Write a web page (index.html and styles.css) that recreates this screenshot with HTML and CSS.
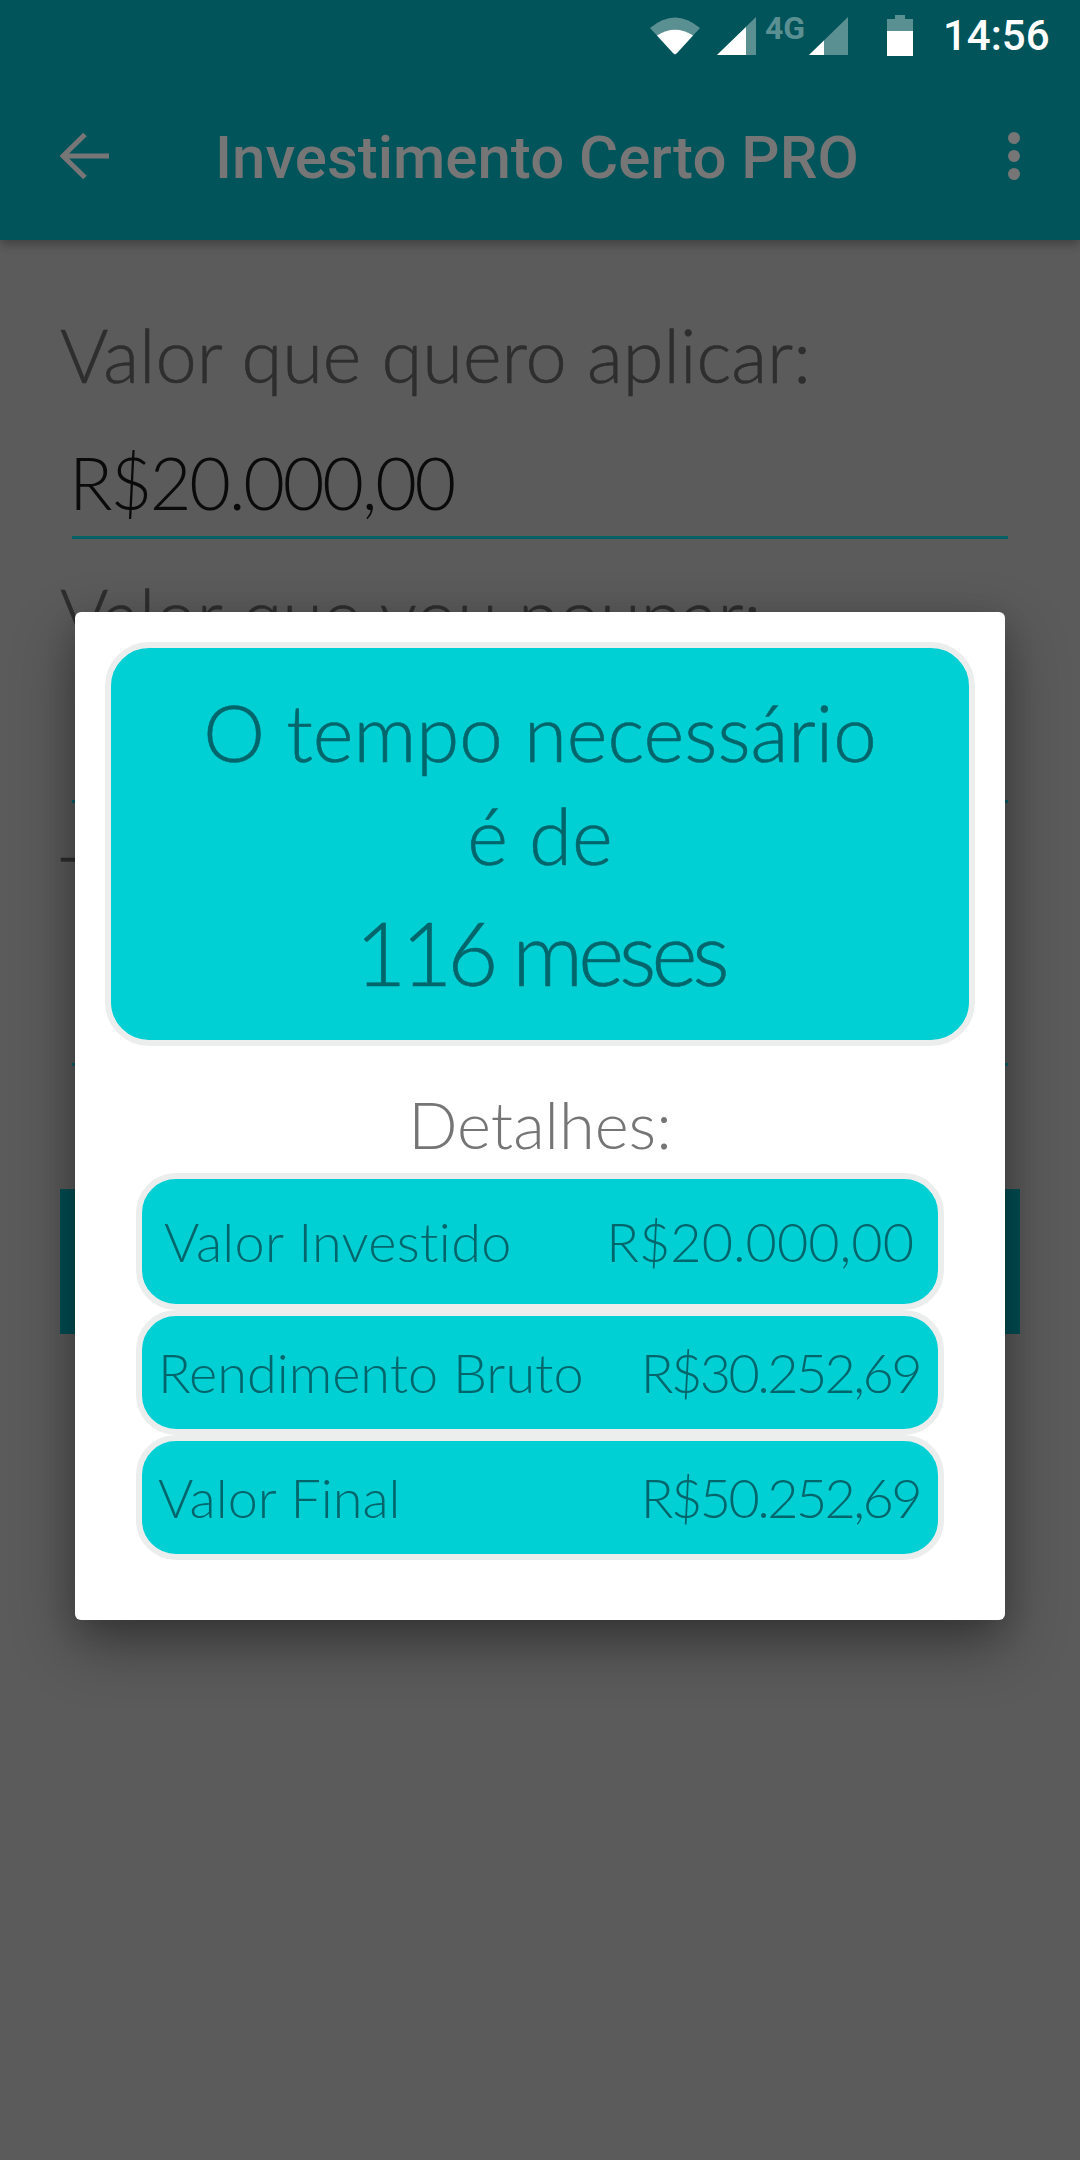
FILE: index.html
```html
<!DOCTYPE html>
<html lang="pt-BR">

<head>
  <meta charset="UTF-8">
  <meta name="viewport" content="width=device-width, initial-scale=1.0">
  <title>Investimento Certo PRO</title>
  <link rel="stylesheet" href="styles.css">
</head>

<body>
  <div class="screen">
    <header class="appbar">
      <div class="statusbar">
        <svg class="ic-wifi" width="50" height="40" viewBox="0 0 50 40">
          <path fill="#5b9093" d="M0 13 Q25 -8 50 13 L25 40 Z" />
          <path fill="#fff" d="M7 20.5 Q25 9 43 20.5 L27 38 Q25 40 23 38 Z" />
        </svg>
        <svg class="ic-signal" width="40" height="38" viewBox="0 0 40 38">
          <path fill="#5b9093" d="M0 38 L39 0 V38 Z" />
          <path fill="#fff" d="M0 38 L29 10 V38 Z" />
        </svg>
        <span class="net">4G</span>
        <svg class="ic-signal2" width="40" height="38" viewBox="0 0 40 38">
          <path fill="#5b9093" d="M0 38 L39 0 V38 Z" />
          <path fill="#fff" d="M0 38 L15 23.5 V38 Z" />
        </svg>
        <svg class="ic-battery" width="26" height="41" viewBox="0 0 26 41">
          <path fill="#5b9093" d="M8 0 H18 V4 H26 V16 H0 V4 H8 Z" />
          <rect fill="#fff" y="16" width="26" height="25" />
        </svg>
        <span class="clock">14:56</span>
      </div>
      <div class="toolbar">
        <svg class="ic-back" width="50" height="46" viewBox="0 0 50 46">
          <path fill="none" stroke="#767676" stroke-width="5" d="M49 23 H3 M25 1.5 L3 23 L25 44.5" />
        </svg>
        <h1>Investimento Certo PRO</h1>
        <div class="more"><i></i><i></i><i></i></div>
      </div>
    </header>

    <main class="form">
      <div class="label">Valor que quero aplicar:</div>
      <div class="field money">R$20.000,00</div>
      <div class="label second">Valor que vou poupar:</div>
      <div class="field short"></div>
      <div class="label third">Taxa de juros ao mês:</div>
      <div class="field short"></div>
      <div class="calc"></div>
    </main>

    <div class="dialog">
      <section class="result">
        <p>O tempo necessário</p>
        <p>é de</p>
        <p class="big">116 meses</p>
      </section>
      <h2>Detalhes:</h2>
      <div class="rows">
        <div class="row r1"><span class="name">Valor Investido</span><span>R$20.000,00</span></div>
        <div class="row r2"><span>Rendimento Bruto</span><span class="val">R$30.252,69</span></div>
        <div class="row r3"><span>Valor Final</span><span class="val">R$50.252,69</span></div>
      </div>
    </div>
  </div>
</body>

</html>
```

FILE: styles.css
```css
* {
  box-sizing: border-box;
}

body {
  margin: 0;
  font-family: Lato, 'Open Sans', sans-serif;
}

.screen {
  position: relative;
  width: 1080px;
  height: 2160px;
  overflow: hidden;
  background: #5b5b5b;
}

.appbar {
  position: relative;
  height: 240px;
  background: #00545a;
  box-shadow: 0 4px 10px rgba(0, 0, 0, 0.3);
}

.statusbar {
  display: flex;
  align-items: flex-start;
  height: 72px;
  padding-left: 650px;
  font-family: Roboto, sans-serif;
}

.ic-wifi {
  margin-top: 15px;
}

.ic-signal {
  margin: 17px 0 0 17px;
}

.net {
  width: 52px;
  margin-top: 11px;
  padding-left: 8px;
  color: #5b9093;
  font-size: 32px;
  font-weight: 700;
  line-height: 34px;
}

.ic-signal2 {
  margin: 17px 0 0 0;
}

.ic-battery {
  margin: 15px 0 0 38px;
}

.clock {
  margin-left: 30px;
  color: #fff;
  font-size: 42px;
  font-weight: 500;
  line-height: 72px;
}

.toolbar {
  display: flex;
  align-items: center;
  height: 168px;
  padding: 0 60px;
}

.toolbar h1 {
  margin: 0 0 0 105px;
  padding-top: 3px;
  color: #767676;
  font-family: Roboto, sans-serif;
  font-size: 60px;
  font-weight: 500;
  white-space: nowrap;
}

.ic-back {
  flex: none;
}

.more {
  display: flex;
  flex-direction: column;
  gap: 6px;
  margin-left: auto;
}

.more i {
  display: block;
  width: 12px;
  height: 12px;
  border-radius: 50%;
  background: #767676;
}

.form {
  padding: 0 60px;
}

.label {
  color: #2e2e2e;
  font-size: 74px;
  font-weight: 300;
  -webkit-text-stroke: 0.6px #2e2e2e;
  line-height: 80px;
  white-space: nowrap;
}

.form > .label:first-child {
  margin-top: 75px;
}

.field {
  height: 143px;
  margin: 0 12px;
  border-bottom: 3px solid #006165;
}

.field.money {
  height: 144px;
  padding-top: 45px;
  color: #0a0a0a;
  font-size: 72px;
  font-weight: 300;
  letter-spacing: -2.3px;
  line-height: 84px;
  text-indent: -3px;
}

.label.second {
  margin-top: 36px;
}

.label.second + .field {
  height: 148px;
}

.label.third {
  margin-top: 40px;
}

.calc {
  height: 145px;
  margin-top: 123px;
  background: #004f54;
}

.dialog {
  position: absolute;
  top: 612px;
  left: 75px;
  width: 930px;
  height: 1008px;
  padding: 30px;
  border-radius: 6px;
  background: #fff;
  box-shadow: 0 24px 60px rgba(0, 0, 0, 0.38), 0 8px 30px rgba(0, 0, 0, 0.14);
}

.result {
  height: 404px;
  padding-top: 33px;
  border: 6px solid #eceeee;
  border-radius: 44px;
  background: #00cfd4;
  color: #00666c;
  -webkit-text-stroke: 0.6px #00666c;
  text-align: center;
}

.result p {
  margin: 0;
  font-size: 78px;
  font-weight: 300;
  line-height: 103px;
}

.result .big {
  font-size: 88px;
  letter-spacing: -5px;
  line-height: 130px;
}

.dialog h2 {
  height: 127px;
  margin: 0;
  padding-top: 40px;
  color: #757575;
  font-size: 65px;
  font-weight: 300;
  line-height: 76px;
  text-align: center;
}

.rows {
  margin: 0 31px;
}

.row {
  display: flex;
  align-items: center;
  justify-content: space-between;
  height: 125px;
  padding: 0 18px 0 16px;
  border: 6px solid #eceeee;
  border-radius: 40px;
  background: #00cfd4;
  color: #00666c;
  font-size: 54px;
  font-weight: 300;
  white-space: nowrap;
}

.row .val {
  letter-spacing: -2.6px;
}

.row.r1 {
  height: 137px;
  padding: 0 24px 0 22px;
}

.row .name {
  letter-spacing: 0.3px;
}
```
